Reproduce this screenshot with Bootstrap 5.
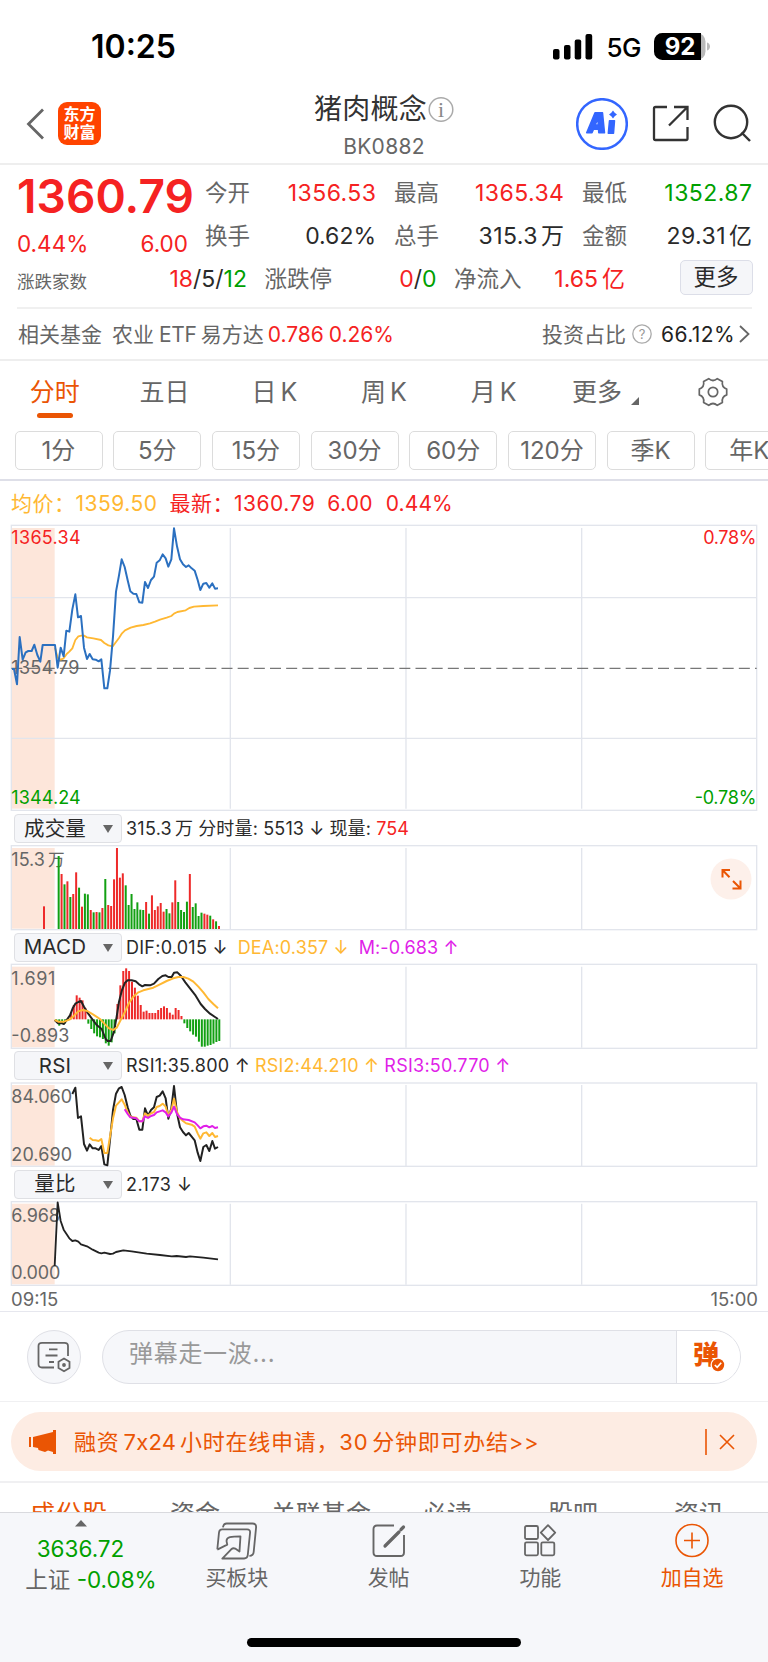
<!DOCTYPE html>
<html lang="zh-CN">
<head>
<meta charset="utf-8">
<meta name="viewport" content="width=device-width, initial-scale=1">
<title>猪肉概念 BK0882</title>
<link href="https://cdn.jsdelivr.net/npm/bootstrap@5.3.0/dist/css/bootstrap.min.css" rel="stylesheet">
<style>
body{font-family:Inter,"Noto Sans CJK SC",sans-serif;line-height:1;color:#2a2a2a;background:#fff;font-size:23px}
svg{display:block;flex:none}
.screen{width:768px;height:1662px;overflow:hidden}
.c-red{color:#f52222}.c-green{color:#00a000}.c-gray{color:#666}.c-orange{color:#ea5504}.c-gold{color:#ffb833}.c-mag{color:#e01fe8}
.statusbar{height:88px;padding:5px 57px 0 91px}
.clock{font-size:32px;font-weight:600}
.net{font-size:26px;font-weight:500;letter-spacing:-.5px}
.header{height:77px;border-bottom:2px solid #eee;padding:0 15px 4px 26px}
.logo{width:43px;height:43px;border-radius:9px;background:#ff4400;color:#fff;font-size:16px;font-weight:700;line-height:17.5px;padding-top:4px;margin-left:14px}
.title-name{font-size:28px;letter-spacing:.2px;color:#333}
.title-code{font-size:21px;letter-spacing:.3px}
.quote{height:144px;margin:0 16px 0 17px;border-bottom:2px solid #f0f0f0;padding-top:7px}
.qgrid{display:grid;grid-template-columns:170px 171px 170px 170px;column-gap:18px;grid-template-rows:43px 43px}
.qgrid>:first-child{margin-right:-5px}
.qgrid>div:not(:first-child){display:flex;align-items:center;justify-content:space-between}
.wide{letter-spacing:.45px;margin-right:-.45px}
.price{font-size:46px;font-weight:600;letter-spacing:.1px;height:52px;padding-top:1px}
.lbl{color:#666;font-size:22.5px}
.qrow{display:grid;grid-template-columns:230px 172px 171px 73px;column-gap:17.5px;height:43px}
.qrow>:last-child{margin-left:37px}
.more{width:73px;height:35px;border:1.5px solid #dcdee8;border-radius:5px;background:#f5f6f9;font-size:22.5px;margin-top:-4px}
.fund{height:52px;border-bottom:2px solid #eee;padding:0 18px 0 18px;font-size:21px}
.tabs{height:70px;display:grid;grid-template-columns:repeat(7,1fr);font-size:25px;padding-bottom:8px}
.tabs .on::after{content:"";position:absolute;left:50%;margin-left:-18px;top:52px;width:36px;height:5px;border-radius:3px;background:#ea5504}
.chips{height:50px;padding-left:14.5px;gap:10.7px;border-bottom:2px solid #dedfe8;overflow:hidden}
.chips div{width:88px;height:39px;flex:none;border:1.5px solid #dcdcdc;border-radius:5px;color:#666;font-size:24px;display:flex;align-items:center;justify-content:center;padding-top:1px}
.legend-row{height:42px;padding:3px 0 0 11px;font-size:21px;letter-spacing:.5px}
.ind{padding-left:14px;font-size:18px;letter-spacing:.25px}
.ind>span{margin-top:1px}
.pick{width:108px;height:29px;border:1.5px solid #dfe0e4;border-radius:4px;background:#f5f6f9;font-size:20.5px;letter-spacing:.2px;padding:1px 8px 0 0;margin-right:4px}
.pick span{flex:1;text-align:center;padding-right:8px}
.tri{width:0;height:0;border:5px solid transparent;border-top:8px solid #666;border-bottom:0}
.axis{height:25px;border-bottom:1.5px solid #e6e7ee;padding:1px 10px 0 11px;font-size:18.5px}
.danmu{height:90px;border-bottom:1.5px solid #f0f0f2;padding:0 27px}
.round{width:54px;height:54px;border-radius:50%;border:1.5px solid #dfe0e6;background:#f6f7fa}
.pill{width:639px;height:54px;border-radius:27px;border:1.5px solid #dfe0e6;background:#f6f7fa;overflow:hidden}
.pill .ph{color:#999;font-size:24px;letter-spacing:.7px;padding-left:26px;padding-bottom:5px}
.pill .act{width:64px;height:100%;border-left:1.5px solid #dfe0e6;background:#fff}
.ad{height:59px;margin:10px 11px 0;border-radius:30px;background:#fdece3;color:#ea5504;font-size:22px}
.subtabs{height:31px;margin-top:10px;border-top:2px solid #f0f0f2;padding:19px 6px 0;display:grid;grid-template-columns:repeat(6,1fr);font-size:25px;overflow:hidden;text-align:center}
.bottomnav{height:150px;border-top:1.5px solid #d9dade;background:#f6f7fa;display:grid;grid-template-columns:161px repeat(4,1fr);position:relative}
.bottomnav .it{display:flex;flex-direction:column;align-items:center;font-size:21px;color:#666}
.bottomnav .it svg{margin:8px 0 6px}
.homebar{position:absolute;left:247px;bottom:15px;width:274px;height:9px;border-radius:5px;background:#000}
.grid line,.grid rect.f{stroke:#e2e5ec;stroke-width:4;fill:none}
.plot{fill:none;stroke-linejoin:round}
</style>
</head>
<body>
<div class="screen d-flex flex-column">

<div class="statusbar d-flex align-items-center justify-content-between">
  <span class="clock text-black">10:25</span>
  <div class="d-flex align-items-center">
    <svg width="40" height="26" viewBox="0 0 40 26"><rect x="0" y="15" width="6.5" height="10.5" rx="2"/><rect x="11" y="11" width="6.5" height="14.5" rx="2"/><rect x="21.7" y="5.5" width="6.5" height="20" rx="2"/><rect x="32.5" y="0" width="6.7" height="25.5" rx="2"/></svg>
    <span class="net text-black" style="margin:2px 13px 0 13px">5G</span>
    <svg width="57" height="28" viewBox="0 0 57 28"><rect width="51.5" height="27" rx="8.5" fill="#b9b9b9"/><path d="M8.500 0H47V27H8.500A8.500 8.500 0 0 1 0 18.500V8.500A8.500 8.500 0 0 1 8.500 0Z"/><path d="M53 9.500C57 10.500 57 16.500 53 17.500Z" fill="#b9b9b9"/><text x="26" y="22" font-size="24" font-weight="700" fill="#fff" text-anchor="middle">92</text></svg>
  </div>
</div>

<div class="header d-flex align-items-center justify-content-between position-relative">
  <div class="d-flex align-items-center">
    <svg width="18" height="32" viewBox="0 0 18 32" fill="none" stroke="#666" stroke-width="2.8"><path d="M17 1.500 2.500 16 17 30.500"/></svg>
    <div class="logo text-center">东方<br>财富</div>
  </div>
  <div class="position-absolute start-0 end-0 top-0 d-flex flex-column align-items-center">
    <div class="d-flex align-items-center" style="margin:7px 0 0 0"><span class="title-name">猪肉概念</span>
      <svg width="27" height="27" viewBox="0 0 27 27" class="ms-0"><circle cx="14" cy="13.500" r="11.800" fill="none" stroke="#aaa" stroke-width="1.5"/><text x="14" y="21" font-family="Liberation Serif" font-size="22" fill="#888" text-anchor="middle">i</text></svg></div>
    <span class="title-code c-gray" style="margin-top:13px">BK0882</span>
  </div>
  <div class="d-flex align-items-center">
    <svg width="52" height="52" viewBox="0 0 52 52"><circle cx="26" cy="26" r="24.800" fill="none" stroke="#3366ff" stroke-width="2.500"/><g fill="#3366ff" stroke="#3366ff" stroke-linejoin="round"><path fill-rule="evenodd" stroke-width="1.500" d="M19 14.700H26.500L28.500 34.700H22.800L22.500 31.200H17.500L16 34.700H10.700ZM21.800 20.500 19.200 27H22.300Z"/><path stroke-width="1.500" d="M33.500 22.700H38.500L37.500 35.300H32.300Z"/><path stroke="none" d="M37 12.500 38.700 14.800 41 16.500 38.700 18.200 37 20.500 35.300 18.200 33 16.500 35.300 14.800Z"/></g></svg>
    <svg width="38" height="38" viewBox="0 0 38 38" style="margin-left:24px" fill="none" stroke="#333" stroke-width="2.300"><path d="M15 2H3.500Q2 2 2 3.500V33.500Q2 35 3.500 35H34Q35.500 35 35.500 33.500V22M22 2H35.500V15M35 2.500 17 20.500"/></svg>
    <svg width="40" height="40" viewBox="0 0 40 40" style="margin-left:23px" fill="none" stroke="#333" stroke-width="2.400"><circle cx="18" cy="18" r="16.200"/><path d="M28.500 28.500 37 37"/></svg>
  </div>
</div>

<div class="quote">
  <div class="qgrid">
    <div style="grid-row:span 2"><div class="price c-red">1360.79</div>
      <div class="d-flex justify-content-between c-red" style="padding:9px 4px 0 0;font-size:22.500px"><span>0.44%</span><span>6.00</span></div></div>
    <div><span class="lbl">今开</span><span class="c-red wide">1356.53</span></div>
    <div><span class="lbl">最高</span><span class="c-red wide">1365.34</span></div>
    <div><span class="lbl">最低</span><span class="c-green wide">1352.87</span></div>
    <div><span class="lbl">换手</span><span>0.62%</span></div>
    <div><span class="lbl">总手</span><span class="wide">315.3<span style="margin-left:3px">万</span></span></div>
    <div><span class="lbl">金额</span><span class="wide">29.31<span style="margin-left:3px">亿</span></span></div>
  </div>
  <div class="qrow">
    <div class="d-flex align-items-center justify-content-between"><span class="c-gray" style="font-size:17.500px;padding-top:5px">涨跌家数</span><span><span class="c-red">18</span>/5/<span class="c-green">12</span></span></div>
    <div class="d-flex align-items-center justify-content-between"><span class="lbl">涨跌停</span><span><span class="c-red">0</span>/<span class="c-green">0</span></span></div>
    <div class="d-flex align-items-center justify-content-between"><span class="lbl">净流入</span><span class="c-red">1.65<span class="ms-1">亿</span></span></div>
    <div class="d-flex align-items-center"><div class="more d-flex align-items-center justify-content-center flex-shrink-0">更多</div></div>
  </div>
</div>

<div class="fund d-flex align-items-center c-gray">
  <span>相关基金</span><span style="margin-left:10px">农业<span style="margin:0 4px 0 5px;letter-spacing:-.3px">ETF</span>易方达</span>
  <span class="c-red" style="margin-left:4px">0.786</span><span class="c-red" style="margin-left:5px">0.26%</span>
  <span class="ms-auto">投资占比</span>
  <svg width="20" height="20" viewBox="0 0 20 20" style="margin:0 9px 0 6px"><circle cx="10" cy="10" r="9.200" fill="none" stroke="#aaa" stroke-width="1.300"/><text x="10" y="15" font-size="13" fill="#999" text-anchor="middle">?</text></svg>
  <span style="color:#222;letter-spacing:.4px">66.12%</span>
  <svg width="12" height="20" viewBox="0 0 12 20" style="margin-left:3px" fill="none" stroke="#666" stroke-width="1.800"><path d="M2 2 10.500 10 2 18"/></svg>
</div>

<div class="tabs align-items-center c-gray text-center">
  <div class="on c-orange position-relative h-100 d-flex align-items-center justify-content-center">分时</div><div>五日</div><div>日<span class="ms-1">K</span></div><div>周<span class="ms-1">K</span></div><div>月<span class="ms-1">K</span></div>
  <div class="d-flex align-items-center justify-content-center ps-1">更多<svg width="8" height="8" viewBox="0 0 8 8" style="margin:18px 0 0 9px"><path d="M8 0V8H0Z" fill="#666"/></svg></div>
  <div class="d-flex justify-content-center"><svg width="32" height="30" viewBox="-16 -15 32 30" fill="none" stroke="#666" stroke-width="1.700" stroke-linejoin="round"><circle r="4.700"/><path d="M13.700-2.900V2.900Q8.400 4.850 9.400 10.400L4.300 13.300Q0 9.700-4.300 13.300L-9.400 10.400Q-8.400 4.850-13.700 2.900V-2.900Q-8.400-4.850-9.400-10.400L-4.300-13.300Q0-9.700 4.300-13.300L9.400-10.400Q8.400-4.850 13.700-2.900Z"/></svg></div>
</div>
<div class="chips d-flex"><div>1分</div><div>5分</div><div>15分</div><div>30分</div><div>60分</div><div>120分</div><div>季K</div><div>年K</div></div>

<div class="legend-row d-flex align-items-center">
  <span class="c-gold">均价：</span><span class="c-gold">1359.50</span>
  <span class="c-red" style="margin-left:12px">最新：</span><span class="c-red">1360.79</span><span class="c-red" style="margin-left:12px;letter-spacing:.3px">6.00</span><span class="c-red" style="margin-left:13px;letter-spacing:.1px">0.44%</span>
</div>

<svg width="768" height="289" viewBox="0 24 2304 867">
  <rect x="35" y="39" width="129" height="842" fill="#fde6da"/>
  <g class="grid"><rect class="f" x="34" y="31" width="2236" height="855"/><line x1="34" x2="2270" y1="248" y2="248"/><line x1="34" x2="2270" y1="670" y2="670"/><line x1="691" x2="691" y1="39" y2="881"/><line x1="1218" x2="1218" y1="39" y2="881"/><line x1="1745" x2="1745" y1="39" y2="881"/></g>
  <path d="M34 460H2270" stroke="#777" stroke-width="4" stroke-dasharray="33 15.500"/>
  <g font-size="54" fill="#666"><text x="34" y="86" textLength="208" fill="#f52222">1365.34</text><text x="34" y="478" textLength="204">1354.79</text><text x="34" y="868" textLength="208" fill="#00a000">1344.24</text><text x="2110" y="86" textLength="159" fill="#f52222">0.78%</text><text x="2084" y="868" textLength="185" fill="#00a000">-0.78%</text></g>
  <path class="plot" stroke="#ffb833" stroke-width="5.500" d="M165 398 173 428 182 434 191 430 200 417 208 410 217 400 226 375 235 364 244 362 252 362 261 367 280 370 303 375 313 384 325 391 338 394 348 381 357 369 366 355 375 346 392 338 410 333 430 330 450 325 465 320 480 314 500 308 514 303 522 296 532 291 557 286 568 279 582 275 610 273 654 271"/>
  <path class="plot" stroke="#2b70c0" stroke-width="6" d="M36 462 42 462 51 508 59 366 68 434 77 412 85 408 95 408 103 389 112 420 121 440 128 390 165 390 173 458 182 398 191 424 199 347 208 350 217 283 226 238 234 307 243 303 252 398 261 432 269 417 278 433 287 434 296 439 304 433 313 520 322 520 330 467 339 365 348 230 357 181 365 133 374 156 383 196 391 229 400 236 409 237 418 262 427 263 435 201 444 219 453 195 462 185 470 143 479 136 488 118 497 130 505 155 514 133 522 40 531 94 540 133 549 148 558 156 566 151 575 160 584 167 593 195 601 225 610 206 619 204 628 218 637 205 645 221 654 220"/>
</svg>

<div class="ind d-flex align-items-center" style="height:33px"><div class="pick d-flex align-items-center"><span>成交量</span><i class="tri"></i></div>
  <span>315.3<span style="margin-left:3px">万</span></span><span style="margin-left:5px;letter-spacing:.15px">分时量: 5513 ↓</span><span style="margin-left:5px;letter-spacing:.1px">现量: <span class="c-red">754</span></span></div>

<div class="position-relative">
<svg width="768" height="86" viewBox="0 120 2304 258">
  <rect x="35" y="129" width="129" height="242" fill="#fde6da"/>
  <g class="grid"><rect class="f" x="34" y="122" width="2236" height="252"/><line x1="691" x2="691" y1="129" y2="372"/><line x1="1218" x2="1218" y1="129" y2="372"/><line x1="1745" x2="1745" y1="129" y2="372"/></g>
  <text x="34" y="182" font-size="54" fill="#666">15.3<tspan dx="9" font-size="50">万</tspan></text>
  <g id="volume"></g>
</svg>
<svg class="position-absolute" style="left:710px;top:13px" width="42" height="42" viewBox="0 0 42 42"><circle cx="21" cy="21" r="20.500" fill="#fdf0ea"/><g fill="none" stroke="#ea5504" stroke-width="2"><path d="M20 12H12.500V19.500M12.500 12 19.500 19.200M30.500 22.500V30.500H22.500M30.500 30.500 23 23"/></g></svg>
</div>

<div class="ind d-flex align-items-center" style="height:32px"><div class="pick d-flex align-items-center"><span>MACD</span><i class="tri"></i></div>
  <span>DIF:0.015 ↓</span><span class="c-gold" style="margin-left:10px;letter-spacing:.15px">DEA:0.357 ↓</span><span class="c-mag" style="margin-left:10px;letter-spacing:.1px">M:-0.683 ↑</span></div>

<svg width="768" height="87" viewBox="0 474 2304 261">
  <rect x="35" y="485" width="129" height="242" fill="#fde6da"/>
  <g class="grid"><rect class="f" x="34" y="478" width="2236" height="252"/><line x1="691" x2="691" y1="485" y2="728"/><line x1="1218" x2="1218" y1="485" y2="728"/><line x1="1745" x2="1745" y1="485" y2="728"/></g>
  <g font-size="54" fill="#666"><text x="34" y="539" textLength="132">1.691</text><text x="34" y="712" textLength="174">-0.893</text></g>
  <g id="macd"></g>
  <path class="plot" stroke="#222" stroke-width="6" d="M164 645 174 655 184 654 192 657 200 645 210 631 218 610 226 596 235 591 243 588 252 605 262 622 275 640 290 660 305 672 317 702 323 708 332 708 342 680 350 635 357 590 366 555 375 533 383 526 395 526 407 529 417 538 427 544 435 540 450 541 462 536 475 522 487 513 497 511 505 516 515 516 522 503 532 502 543 513 556 532 570 550 587 572 602 597 615 612 630 626 645 636 654 642"/>
  <path class="plot" stroke="#ffb833" stroke-width="6" d="M164 645 175 650 192 650 210 643 222 632 235 619 248 615 262 618 280 629 300 642 315 658 327 670 340 675 350 668 362 645 375 620 387 594 400 575 415 562 430 556 460 548 480 538 500 528 520 520 535 516 550 516 565 521 580 530 595 545 610 562 625 582 640 597 654 610"/>
</svg>

<div class="ind d-flex align-items-center" style="height:31px"><div class="pick d-flex align-items-center"><span>RSI</span><i class="tri"></i></div>
  <span>RSI1:35.800 ↑</span><span class="c-gold" style="margin-left:5px;letter-spacing:.2px">RSI2:44.210 ↑</span><span class="c-mag" style="margin-left:5px">RSI3:50.770 ↑</span></div>

<svg width="768" height="87" viewBox="0 93 2304 261">
  <rect x="35" y="105" width="129" height="242" fill="#fde6da"/>
  <g class="grid"><rect class="f" x="34" y="99" width="2236" height="250"/><line x1="691" x2="691" y1="105" y2="348"/><line x1="1218" x2="1218" y1="105" y2="348"/><line x1="1745" x2="1745" y1="105" y2="348"/></g>
  <g font-size="54" fill="#666"><text x="34" y="159" textLength="182">84.060</text><text x="34" y="332" textLength="182">20.690</text></g>
  <path class="plot" stroke="#222" stroke-width="6" d="M217 132 226 113 234 204 243 199 252 282 261 302 269 283 278 295 287 295 296 300 304 288 313 343 322 346 330 270 339 180 348 131 357 115 365 111 374 135 383 172 391 197 400 207 409 207 418 239 427 239 435 175 444 197 453 180 462 172 470 141 479 137 488 124 497 145 505 206 514 175 522 108 531 190 540 232 549 246 558 256 566 249 575 260 584 271 593 308 601 333 610 291 619 285 628 303 637 273 645 296 654 291"/>
  <path class="plot" stroke="#ffb833" stroke-width="6" d="M269 263 278 270 287 271 296 273 304 267 313 309 322 309 330 260 339 205 348 167 357 157 365 148 374 164 383 187 391 200 409 203 418 214 427 214 435 190 444 197 453 190 462 186 470 171 479 168 488 161 497 170 505 197 514 180 522 146 531 186 540 205 549 213 558 220 575 224 584 230 593 250 601 266 610 250 619 247 628 258 637 249 645 261 654 258"/>
  <path class="plot" stroke="#e01fe8" stroke-width="6" d="M374 178 383 192 391 202 409 205 418 214 427 214 435 199 444 204 453 198 462 195 470 187 479 184 488 181 497 187 505 199 514 188 522 170 531 192 540 203 549 208 566 210 584 217 593 226 601 235 610 229 619 227 628 232 637 228 645 234 654 232"/>
</svg>

<div class="ind d-flex align-items-center" style="height:32px"><div class="pick d-flex align-items-center"><span>量比</span><i class="tri"></i></div><span style="letter-spacing:.5px">2.173 ↓</span></div>

<svg width="768" height="87" viewBox="0 450 2304 261">
  <rect x="35" y="461" width="129" height="242" fill="#fde6da"/>
  <g class="grid"><rect class="f" x="34" y="455" width="2236" height="251"/><line x1="691" x2="691" y1="461" y2="704"/><line x1="1218" x2="1218" y1="461" y2="704"/><line x1="1745" x2="1745" y1="461" y2="704"/></g>
  <g font-size="54" fill="#666"><text x="34" y="515" textLength="146">6.968</text><text x="34" y="687" textLength="147">0.000</text></g>
  <path class="plot" stroke="#222" stroke-width="5.500" d="M164 648 173 457 182 513 191 539 199 551 208 565 217 573 226 571 235 575 243 583 261 589 278 599 296 608 304 610 313 608 330 612 339 611 348 606 370 601 395 604 440 611 480 615 515 619 530 618 558 621 570 619 610 623 654 628"/>
</svg>
<div class="axis d-flex align-items-center justify-content-between c-gray"><span>09:15</span><span>15:00</span></div>

<div class="danmu d-flex align-items-center justify-content-between">
  <div class="round d-flex align-items-center justify-content-center"><svg width="34" height="32" viewBox="0 0 34 32" fill="none" stroke="#666" stroke-width="1.800"><path d="M17 26.500H5Q1.500 26.500 1.500 23V5Q1.500 1.800 5 1.800H27.500Q31 1.800 31 5V15M12 8.300H20.500M8.500 14.500H20.500M12 21H17" /><path d="M27 17.500 32.500 20.700V27L27 30.200 21.500 27V20.700Z"/><circle cx="27" cy="24" r="1" fill="#666"/></svg></div>
  <div class="pill d-flex align-items-center justify-content-between"><span class="ph">弹幕走一波...</span>
    <div class="act d-flex align-items-center"><svg width="34" height="34" viewBox="0 0 34 34" style="margin-left:16px"><text x="0" y="24" font-size="26" font-weight="900" fill="#ea5504">弹</text><circle cx="25" cy="25" r="7.500" fill="#fff"/><circle cx="25" cy="25" r="6.200" fill="#ea5504"/><path d="M21.800 25 24.200 27.300 28.200 22.800" fill="none" stroke="#fff" stroke-width="1.700"/></svg></div></div>
</div>

<div class="ad d-flex align-items-center flex-shrink-0">
  <svg width="28" height="26" viewBox="0 0 28 26" style="margin-left:18px" fill="#ea5504"><path d="M0 8H2V18H0ZM4 8 24 3V1H27V25H24V23L19 21.500 16 23 9.500 21 9 19 4 18Z"/></svg>
  <span style="margin-left:17px;letter-spacing:.75px">融资<span style="margin:0 4px;letter-spacing:.2px">7x24</span>小时在线申请，<span style="margin-right:4px">30</span>分钟即可办结&gt;&gt;</span>
  <svg class="ms-auto" style="margin-right:22px" width="30" height="28" viewBox="0 0 30 28" stroke="#ea5504" stroke-width="1.600"><path d="M1 1V27M15 7 29 21M29 7 15 21"/></svg>
</div>

<div class="subtabs c-gray flex-shrink-0"><span class="c-orange" style="letter-spacing:1px">成份股</span><span>资金</span><span>关联基金</span><span>必读</span><span>股吧</span><span>资讯</span></div>

<div class="bottomnav flex-shrink-0">
  <div class="d-flex flex-column align-items-center" style="padding-top:7px">
    <svg width="12" height="7" viewBox="0 0 12 7"><path d="M6 0 12 6.500H0Z" fill="#666"/></svg>
    <span class="c-green" style="margin-top:11px;font-size:22.500px">3636.72</span>
    <span class="c-gray text-nowrap" style="margin:8px 0 0 21px;font-size:22.500px">上证 <span class="c-green">-0.08%</span></span>
  </div>
  <div class="it"><svg width="43" height="40" viewBox="645 695 130 120" fill="none" stroke="#666" stroke-width="5.500" stroke-linejoin="round"><path d="M669 714Q671 702 680 702H758Q771 702 769 716L762 788Q761 800 749 800M652 780 657 730Q658 720 667 720H742Q752 720 751 730L744 798Q743 808 733 808H667L694 780Q700 775 706 778L719 787 722 741Q700 741 690 743 679 746 680 756L682 766 652 781"/></svg><span>买板块</span></div>
  <div class="it"><svg width="40" height="40" viewBox="0 0 40 40" fill="none" stroke="#666" stroke-width="1.900"><path d="M25 4.500H8Q4.500 4.500 4.500 8V31.500Q4.500 35 8 35H31.500Q35 35 35 31.500V14"/><path d="M16 25 30 11M32 8.500 34.500 6" stroke-width="3.200" stroke-linecap="round"/></svg><span>发帖</span></div>
  <div class="it"><svg width="40" height="40" viewBox="0 0 40 40" fill="none" stroke="#666" stroke-width="1.800" stroke-linejoin="round"><rect x="5" y="5" width="13" height="13" rx="1.500"/><rect x="5" y="21.300" width="13" height="13" rx="1.500"/><rect x="21.300" y="21.300" width="13" height="13" rx="1.500"/><path d="M28 4.200 35.200 11.700 28 19 20.800 11.700Z"/></svg><span>功能</span></div>
  <div class="it c-orange"><svg width="40" height="40" viewBox="0 0 40 40" fill="none" stroke="#ea5504" stroke-width="1.600"><circle cx="20" cy="19.500" r="16"/><path d="M20 11.500V27.500M12 19.500H28"/></svg><span class="c-orange">加自选</span></div>
  <div class="homebar"></div>
</div>
</div>

<script>
// Per-minute bars: value = top (or bottom) edge of the bar, letter = colour
const RED = '#ee2a2a', GREEN = '#12a012';
function bar(x, a, b, fill) {
  return `<rect x="${x - 3}" y="${Math.min(a, b)}" width="6" height="${Math.abs(a - b)}" fill="${fill}"/>`;
}
const vol = '153g 207r 238g 229r 276g 267r 202r 248g 305r 266g 268g 315r 322g 321r 322g 309r 222g 300r 303r 223r 129r 218r 205r 241g 300g 267g 312g 292g 314g 315g 291r 326g 271r 315r 304r 294r 320r 312g 325g 292r 226r 291g 315g 321g 290g 207r 306g 295g 333g 323g 326r 329r 332g 343r 349g 363r'.split(' ');
document.getElementById('volume').innerHTML = bar(132, 304, 372, RED) +
  vol.map((v, i) => bar(176 + i * 8.745, parseInt(v), 372, v.endsWith('r') ? RED : GREEN)).join('');
const macd = [650,662,655,655,640,625,600,571,578,586,610,656,672,685,694,697,702,715,722,712,685,597,541,498,490,498,530,548,572,600,620,617,624,624,624,615,609,604,609,623,629,609,615,633,655,669,679,689,695,710,725,725,722,720,716,711,708];
document.getElementById('macd').innerHTML =
  macd.map((y, i) => bar(169 + i * 8.73, y, 643, y < 643 ? RED : GREEN)).join('');
</script>
<script src="https://cdn.jsdelivr.net/npm/bootstrap@5.3.0/dist/js/bootstrap.bundle.min.js"></script>
</body>
</html>
